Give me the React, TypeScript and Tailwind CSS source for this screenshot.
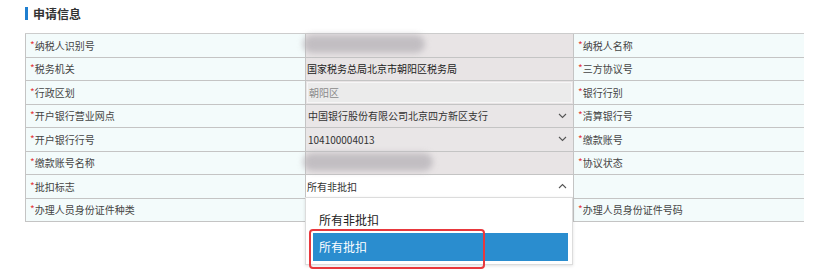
import React from "react";

const font = { fontFamily: '"Noto Sans CJK SC", "Noto Sans", sans-serif' };

function Label({ text }: { text: string }) {
  if (!text) return <div className="h-full bg-[#f3fbfb]" />;
  return (
    <div className="h-full bg-[#f3fbfb] flex items-center pl-[4px] text-[10px] text-[#444]">
      <span className="text-[#e4393c] text-[10px] -mt-[2px]">*</span>
      <span>{text}</span>
    </div>
  );
}

function Chevron({ up }: { up?: boolean }) {
  return (
    <svg width="9" height="6" viewBox="0 0 9 6" className="shrink-0">
      {up ? (
        <path d="M1 5 L4.5 1.5 L8 5" fill="none" stroke="#555" strokeWidth="1.1" />
      ) : (
        <path d="M1 1 L4.5 4.5 L8 1" fill="none" stroke="#555" strokeWidth="1.1" />
      )}
    </svg>
  );
}

type V =
  | { kind: "blur"; w: number }
  | { kind: "text"; text: string }
  | { kind: "input"; text: string }
  | { kind: "select"; text: string }
  | { kind: "open"; text: string }
  | { kind: "empty" };

function Value({ v }: { v: V }) {
  if (v.kind === "blur")
    return (
      <div className="relative h-full bg-[#e8e4e5] overflow-visible">
        <div
          className="absolute left-[-3px] top-[1px] h-[18px] rounded-full bg-[#b9b5ba] blur-[3px] opacity-80"
          style={{ width: v.w }}
        />
      </div>
    );
  if (v.kind === "text")
    return (
      <div className="h-full bg-[#e8e4e5] flex items-center pl-[1px] text-[10px] text-[#222]">
        {v.text}
      </div>
    );
  if (v.kind === "input")
    return (
      <div className="h-full bg-[#e8e4e5] p-[1px]">
        <div className="h-full bg-[#ebebeb] border border-[#f6f6f6] flex items-center pl-[1px] text-[10px] text-[#8a8a8a]">
          {v.text}
        </div>
      </div>
    );
  if (v.kind === "select")
    return (
      <div className="h-full bg-[#e9e6e7] flex items-center justify-between pl-[2px] pr-[6px] text-[10px] text-[#333]">
        <span>{v.text}</span>
        <Chevron />
      </div>
    );
  if (v.kind === "open")
    return (
      <div className="h-full bg-white flex items-center justify-between pl-[1px] pr-[6px] text-[10px] text-[#333]">
        <span>{v.text}</span>
        <Chevron up />
      </div>
    );
  return <div className="h-full bg-white" />;
}

const rows: { l: string; v: V; r: string }[] = [
  { l: "纳税人识别号", v: { kind: "blur", w: 122 }, r: "纳税人名称" },
  { l: "税务机关", v: { kind: "text", text: "国家税务总局北京市朝阳区税务局" }, r: "三方协议号" },
  { l: "行政区划", v: { kind: "input", text: "朝阳区" }, r: "银行行别" },
  { l: "开户银行营业网点", v: { kind: "select", text: "中国银行股份有限公司北京四方新区支行" }, r: "清算银行号" },
  { l: "开户银行行号", v: { kind: "select", text: "104100004013" }, r: "缴款账号" },
  { l: "缴款账号名称", v: { kind: "blur", w: 130 }, r: "协议状态" },
  { l: "批扣标志", v: { kind: "open", text: "所有非批扣" }, r: "" },
  { l: "办理人员身份证件种类", v: { kind: "empty" }, r: "办理人员身份证件号码" },
];

export default function App() {
  return (
    <div className="relative w-[824px] h-[273px] bg-white overflow-hidden" style={font}>
      <div className="pt-[7px] pl-[25px] flex items-center gap-[5px] h-[20px]">
        <div className="w-[3px] h-[13px] bg-[#1f7fd0]" />
        <span className="text-[12px] font-bold text-[#333] leading-none">申请信息</span>
      </div>
      <div className="mt-[13px] ml-[25px] w-[779px] border-t border-[#cccccc]">
        {rows.map((row, i) => (
          <div
            key={i}
            className="grid grid-cols-[280px_268px_231px] h-[23.5px] border-b border-[#c4c4c4] box-border"
          >
            <div className="border-l border-[#c4c4c4] h-full">
              <Label text={row.l} />
            </div>
            <div className="border-l border-[#c4c4c4] h-full">
              <Value v={row.v} />
            </div>
            <div className="border-l border-[#c4c4c4] h-full">
              <Label text={row.r} />
            </div>
          </div>
        ))}
      </div>

      {/* dropdown */}
      <div className="absolute left-[305px] top-[197px] w-[268px] h-[68px] bg-white border border-[#dcdcdc] shadow-[0_1px_3px_rgba(0,0,0,0.12)] flex flex-col">
        <div className="h-[35px] flex items-end pb-[5px] pl-[13px] text-[12px] leading-[17px] text-[#222]">所有非批扣</div>
        <div className="ml-[7px] mr-[4px] h-[28px] bg-[#2a8dcf] flex items-center pl-[6px] text-[12px] text-white">
          所有批扣
        </div>
      </div>
      <div className="absolute left-[309px] top-[229px] w-[176px] h-[40px] border-2 border-[#e8383d] rounded-[4px]" />
    </div>
  );
}
